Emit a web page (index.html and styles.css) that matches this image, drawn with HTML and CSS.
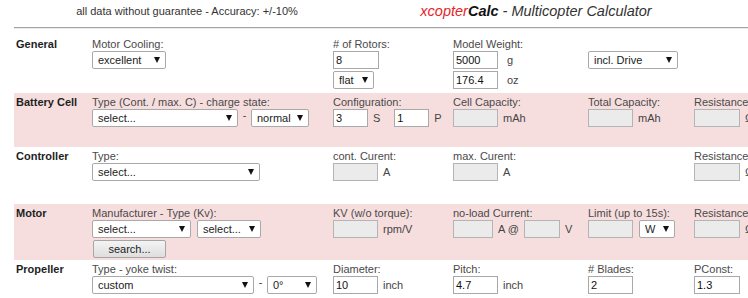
FILE: index.html
```html
<!DOCTYPE html>
<html lang="en">
<head>
<meta charset="utf-8">
<title>xcopterCalc - Multicopter Calculator</title>
<link rel="stylesheet" href="styles.css">
</head>
<body>
<header class="top">
  <div class="top-note">all data without guarantee - Accuracy: +/-10%</div>
  <div class="top-title"><span class="brand-x">xcopter</span><b class="brand-c">Calc</b> - Multicopter Calculator</div>
</header>
<div class="rule"></div>

<main class="sheet">
  <section class="row row-general">
    <div class="sec">General</div>
    <div class="cell">
      <div class="lbl">Motor Cooling:</div>
      <div class="line"><span class="sel w74"><select><option>excellent</option></select></span></div>
    </div>
    <div class="cell">
      <div class="lbl"># of Rotors:</div>
      <div class="line"><input class="inp w46" value="8"></div>
      <div class="line line2"><span class="sel w41"><select><option>flat</option></select></span></div>
    </div>
    <div class="cell">
      <div class="lbl">Model Weight:</div>
      <div class="line"><input class="inp w45" value="5000"><span class="unit u-g">g</span></div>
      <div class="line line2"><input class="inp w45" value="176.4"><span class="unit u-g">oz</span></div>
    </div>
    <div class="cell">
      <div class="lbl">&nbsp;</div>
      <div class="line"><span class="sel w90"><select><option>incl. Drive</option></select></span></div>
    </div>
    <div class="cell"></div>
  </section>

  <section class="row row-battery pink">
    <div class="sec">Battery Cell</div>
    <div class="cell">
      <div class="lbl">Type (Cont. / max. C) - charge state:</div>
      <div class="line"><span class="sel w146"><select><option>select...</option></select></span><span class="dash">-</span><span class="sel w58"><select><option>normal</option></select></span></div>
    </div>
    <div class="cell">
      <div class="lbl">Configuration:</div>
      <div class="line"><input class="inp w35" value="3"><span class="unit u-s">S</span><input class="inp w35" value="1"><span class="unit">P</span></div>
    </div>
    <div class="cell">
      <div class="lbl">Cell Capacity:</div>
      <div class="line"><input class="inp w45" disabled><span class="unit">mAh</span></div>
    </div>
    <div class="cell">
      <div class="lbl">Total Capacity:</div>
      <div class="line"><input class="inp w45" disabled><span class="unit">mAh</span></div>
    </div>
    <div class="cell">
      <div class="lbl">Resistance:</div>
      <div class="line"><input class="inp w46" disabled><span class="unit">Ω</span></div>
    </div>
  </section>

  <section class="row row-controller">
    <div class="sec">Controller</div>
    <div class="cell">
      <div class="lbl">Type:</div>
      <div class="line"><span class="sel w168"><select><option>select...</option></select></span></div>
    </div>
    <div class="cell">
      <div class="lbl">cont. Curent:</div>
      <div class="line"><input class="inp w45" disabled><span class="unit">A</span></div>
    </div>
    <div class="cell">
      <div class="lbl">max. Curent:</div>
      <div class="line"><input class="inp w45" disabled><span class="unit">A</span></div>
    </div>
    <div class="cell"></div>
    <div class="cell">
      <div class="lbl">Resistance:</div>
      <div class="line"><input class="inp w46" disabled><span class="unit">Ω</span></div>
    </div>
  </section>

  <section class="row row-motor pink">
    <div class="sec">Motor</div>
    <div class="cell">
      <div class="lbl">Manufacturer - Type (Kv):</div>
      <div class="line"><span class="sel w99"><select><option>select...</option></select></span><span class="sel w64 sel-gap"><select><option>select...</option></select></span></div>
      <div class="line line2"><button class="btn" type="button">search...</button></div>
    </div>
    <div class="cell">
      <div class="lbl">KV (w/o torque):</div>
      <div class="line"><input class="inp w45" disabled><span class="unit">rpm/V</span></div>
    </div>
    <div class="cell">
      <div class="lbl">no-load Current:</div>
      <div class="line"><input class="inp w40" disabled><span class="unit u-at">A @</span><input class="inp w36" disabled><span class="unit">V</span></div>
    </div>
    <div class="cell">
      <div class="lbl">Limit (up to 15s):</div>
      <div class="line"><input class="inp w45" disabled><span class="sel w36 sel-gap"><select><option>W</option></select></span></div>
    </div>
    <div class="cell">
      <div class="lbl">Resistance:</div>
      <div class="line"><input class="inp w46" disabled><span class="unit">Ω</span></div>
    </div>
  </section>

  <section class="row row-propeller">
    <div class="sec">Propeller</div>
    <div class="cell">
      <div class="lbl">Type - yoke twist:</div>
      <div class="line"><span class="sel w162"><select><option>custom</option></select></span><span class="dash">-</span><span class="sel w50"><select><option>0°</option></select></span></div>
    </div>
    <div class="cell">
      <div class="lbl">Diameter:</div>
      <div class="line"><input class="inp w45" value="10"><span class="unit">inch</span></div>
    </div>
    <div class="cell">
      <div class="lbl">Pitch:</div>
      <div class="line"><input class="inp w45" value="4.7"><span class="unit">inch</span></div>
    </div>
    <div class="cell">
      <div class="lbl"># Blades:</div>
      <div class="line"><input class="inp w45" value="2"></div>
    </div>
    <div class="cell">
      <div class="lbl">PConst:</div>
      <div class="line"><input class="inp w46" value="1.3"></div>
    </div>
  </section>
</main>
</body>
</html>
```

FILE: styles.css
```css
html, body {
  margin: 0;
  padding: 0;
  overflow: hidden;
  background: #ffffff;
}

body {
  font-family: "Liberation Sans", Arial, sans-serif;
  font-size: 11px;
  color: #444;
}

/* header */
.top {
  display: grid;
  grid-template-columns: 374px 324px;
  height: 20px;
  padding-top: 1px;
  align-items: center;
}
.top-note {
  text-align: center;
  font-size: 11px;
  color: #333;
}
.top-title {
  text-align: center;
  font-size: 14.5px;
  font-style: italic;
  color: #333;
}
.brand-x { color: #e4262b; }
.brand-c { color: #111; font-weight: bold; }

.rule {
  margin: 6px 0 0 14px;
  border-top: 1px solid #a3a3a3;
  border-bottom: 1px solid #ececec;
}

/* sheet */
.sheet {
  margin: 6px 0 0 14px;
  width: 800px;
}

.row {
  display: grid;
  grid-template-columns: 78px 241px 120px 135px 106px 120px;
  padding-top: 3px;
  box-sizing: border-box;
}
.row-general { height: 58px; }
.row-battery { height: 54px; }
.row-controller { height: 57px; }
.row-motor { height: 56px; }
.row-propeller { height: 40px; }

.pink { background: #f6dede; }

.sec {
  padding-left: 2px;
  font-weight: bold;
  color: #1e1e1e;
  line-height: 13px;
}

.cell {
  display: flex;
  flex-direction: column;
}

.lbl {
  line-height: 13px;
  color: #4a4a4a;
  white-space: nowrap;
}

.line {
  display: flex;
  align-items: center;
  height: 18px;
  white-space: nowrap;
}
.line2 { margin-top: 2px; }

/* inputs */
.inp {
  box-sizing: border-box;
  height: 18px;
  margin: 0;
  padding: 0 2px;
  border: 1px solid #a9a9a9;
  background: #fff;
  font-family: "Liberation Sans", Arial, sans-serif;
  font-size: 11px;
  color: #111;
  outline: none;
}
.inp:disabled {
  background: #ebebeb;
  border-color: #b4b4b4;
}

.w35 { width: 35px; }
.w36 { width: 36px; }
.w40 { width: 40px; }
.w41 { width: 41px; }
.w45 { width: 45px; }
.w46 { width: 46px; }
.w50 { width: 50px; }
.w58 { width: 58px; }
.w64 { width: 64px; }
.w74 { width: 74px; }
.w90 { width: 90px; }
.w99 { width: 99px; }
.w146 { width: 146px; }
.w162 { width: 162px; }
.w168 { width: 168px; }

.unit {
  margin-left: 5px;
  color: #444;
}
.u-g { margin-left: 9px; }
.u-s { margin-right: 14px; }
.u-at { margin-right: 5px; }

.dash {
  width: 13px;
  text-align: center;
  color: #444;
  align-self: flex-start;
  line-height: 12px;
}

/* selects */
.sel {
  position: relative;
  display: inline-block;
  height: 18px;
}
.sel-gap { margin-left: 6px; }
.sel select {
  -webkit-appearance: none;
  appearance: none;
  box-sizing: border-box;
  width: 100%;
  height: 18px;
  margin: 0;
  padding: 0 14px 0 5px;
  border: 1px solid #a9a9a9;
  border-radius: 2px;
  background: #fff;
  font-family: "Liberation Sans", Arial, sans-serif;
  font-size: 11px;
  color: #222;
  outline: none;
}
.sel::after {
  content: "";
  position: absolute;
  right: 6px;
  top: 6px;
  width: 0;
  height: 0;
  border-left: 3.5px solid transparent;
  border-right: 3.5px solid transparent;
  border-top: 6px solid #111;
  pointer-events: none;
}

/* button */
.btn {
  box-sizing: border-box;
  width: 73px;
  height: 18px;
  margin: 0 0 0 1px;
  padding: 0;
  border: 1px solid #a6a6a6;
  border-radius: 2px;
  background: linear-gradient(#f4f4f4, #dedede);
  font-family: "Liberation Sans", Arial, sans-serif;
  font-size: 11px;
  color: #222;
}
```
